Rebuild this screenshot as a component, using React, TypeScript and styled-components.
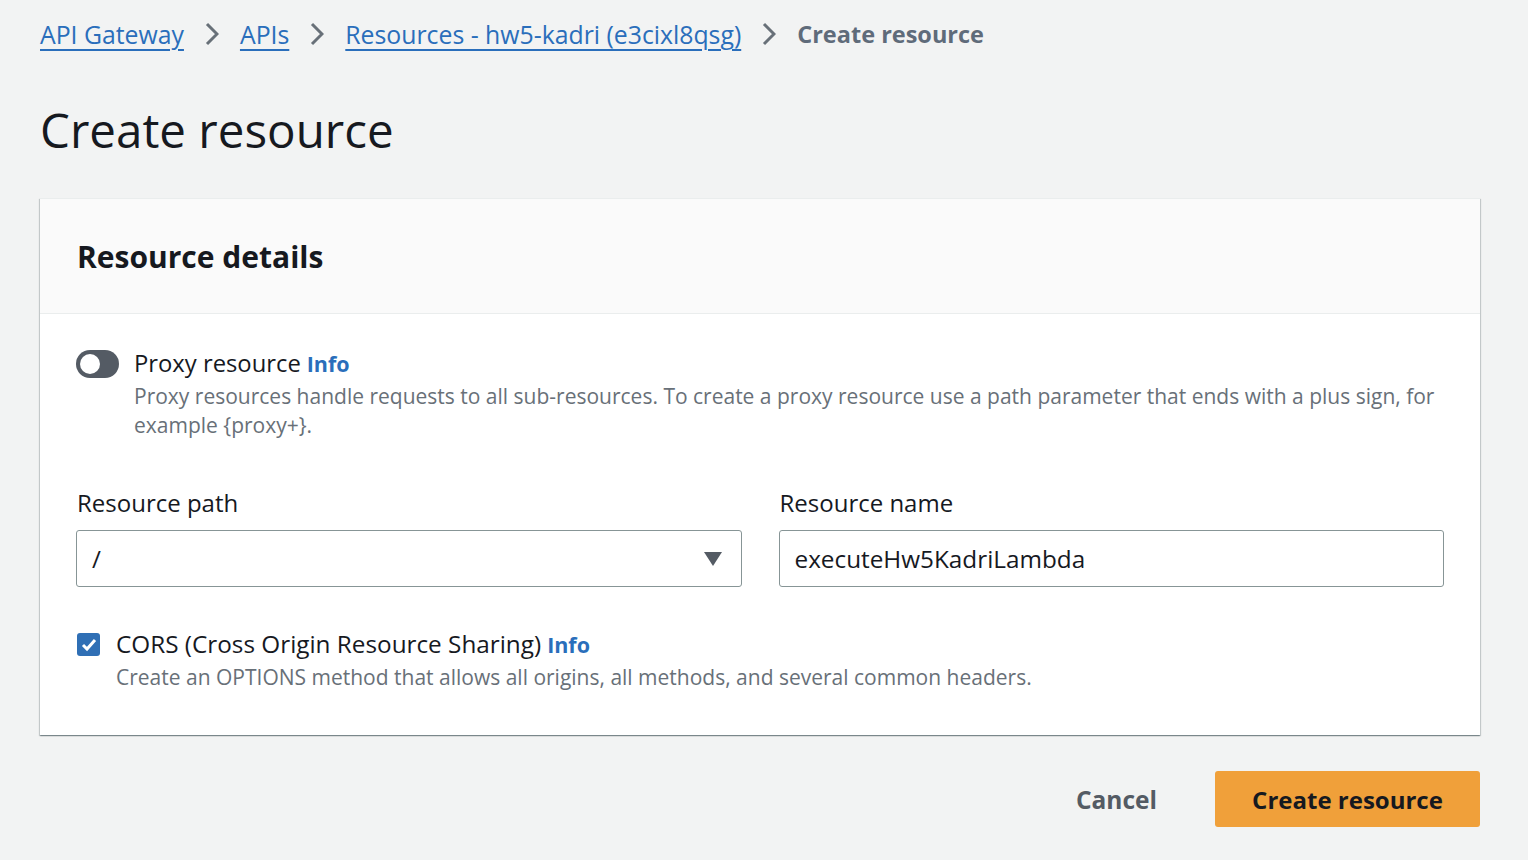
import React from 'react';
import styled, { createGlobalStyle } from 'styled-components';

const GlobalStyle = createGlobalStyle`
  html, body {
    margin: 0;
    padding: 0;
    background: #f2f3f3;
    font-family: "Open Sans", "Noto Sans", sans-serif;
    color: #16191f;
  }
`;

const Page = styled.div`
  padding: 14px 48px 0 40px;
  width: 1440px;
`;

const Breadcrumbs = styled.nav`
  display: flex;
  align-items: center;
  gap: 21px;
  height: 40px;
  font-size: 24.8px;
`;

const Crumb = styled.a`
  color: #2a6ebb;
  text-decoration: underline;
  text-underline-offset: 5px;
  text-decoration-thickness: 2px;
`;

const CurrentCrumb = styled.span`
  color: #5f6b7a;
  font-weight: 700;
  font-size: 23.5px;
`;

const Title = styled.h1`
  margin: 48px 0 40px;
  font-size: 47.5px;
  font-weight: 400;
  line-height: 56px;
`;

const Card = styled.section`
  background: #fff;
  box-shadow: 0 1px 1px 0 rgba(0, 28, 36, 0.3), 1px 1px 1px 0 rgba(0, 28, 36, 0.15),
    -1px 1px 1px 0 rgba(0, 28, 36, 0.15);
  border-top: 1px solid #eaeded;
`;

const CardHeader = styled.header`
  background: #fafafa;
  border-bottom: 1px solid #eaeded;
  height: 114px;
  display: flex;
  align-items: center;
  padding: 0 37px;
`;

const CardTitle = styled.h2`
  margin: 0;
  font-size: 30px;
  font-weight: 700;
`;

const CardBody = styled.div`
  padding: 33px 36px 43px 36px;
  display: flex;
  flex-direction: column;
`;

const OptionRow = styled.div<{ $gap: number }>`
  display: flex;
  align-items: flex-start;
  gap: ${(p) => p.$gap}px;
`;

const Toggle = styled.span`
  flex: none;
  width: 43px;
  height: 28px;
  border-radius: 14px;
  background: #545b64;
  position: relative;
  margin-top: 3px;
  &::after {
    content: '';
    position: absolute;
    left: 4px;
    top: 4px;
    width: 20px;
    height: 20px;
    border-radius: 50%;
    background: #fff;
  }
`;

const CheckBox = styled.span`
  flex: none;
  width: 23px;
  height: 23px;
  border-radius: 3px;
  background: #2f6fb5;
  display: flex;
  align-items: center;
  justify-content: center;
  margin: 5px 0 0 1px;
`;

const OptionText = styled.div`
  display: flex;
  flex-direction: column;
`;

const OptionLabel = styled.div<{ $size: number }>`
  font-size: ${(p) => p.$size}px;
  line-height: 32px;
`;

const Info = styled.a`
  color: #2a6ebb;
  font-weight: 700;
  font-size: 21.5px;
  margin-left: 6px;
`;

const Description = styled.div`
  font-size: 21px;
  line-height: 29px;
  color: #687078;
  margin-top: 2px;
`;

const FieldGrid = styled.div`
  display: grid;
  grid-template-columns: 1fr 1fr;
  gap: 37px;
  margin: 47px 0 41px;
`;

const Field = styled.div`
  display: flex;
  flex-direction: column;
  gap: 11px;
`;

const FieldLabel = styled.label`
  font-size: 24px;
  line-height: 32px;
  padding-left: 1px;
`;

const InputBox = styled.div`
  height: 57px;
  box-sizing: border-box;
  border: 1px solid #879596;
  border-radius: 3px;
  background: #fff;
  display: flex;
  align-items: center;
  justify-content: space-between;
  padding: 0 19px 0 15px;
  font-size: 24.3px;
`;

const Actions = styled.div`
  display: flex;
  justify-content: flex-end;
  align-items: center;
  gap: 58px;
  margin-top: 36px;
`;

const TextButton = styled.button`
  background: none;
  border: none;
  font-family: inherit;
  font-size: 24.5px;
  font-weight: 700;
  color: #545b64;
  padding: 0;
`;

const PrimaryButton = styled.button`
  background: #f0a03a;
  border: none;
  border-radius: 3px;
  height: 56px;
  width: 265px;
  font-family: inherit;
  font-size: 24px;
  font-weight: 700;
  color: #16191f;
`;

const proxyHelp =
  'Proxy resources handle requests to all sub-resources. To create a proxy resource use a path parameter that ends with a plus sign, for example {proxy+}.';

function Chevron() {
  return (
    <svg width="14" height="26" viewBox="0 0 14 26">
      <path d="M2 3l10 10-10 10" fill="none" stroke="#687078" strokeWidth="3" />
    </svg>
  );
}

export default function App() {
  return (
    <>
      <GlobalStyle />
      <Page>
        <Breadcrumbs>
          <Crumb>API Gateway</Crumb>
          <Chevron />
          <Crumb>APIs</Crumb>
          <Chevron />
          <Crumb>Resources - hw5-kadri (e3cixl8qsg)</Crumb>
          <Chevron />
          <CurrentCrumb>Create resource</CurrentCrumb>
        </Breadcrumbs>
        <Title>Create resource</Title>
        <Card>
          <CardHeader>
            <CardTitle>Resource details</CardTitle>
          </CardHeader>
          <CardBody>
            <OptionRow $gap={15}>
              <Toggle />
              <OptionText>
                <OptionLabel $size={23.8}>
                  Proxy resource<Info>Info</Info>
                </OptionLabel>
                <Description>{proxyHelp}</Description>
              </OptionText>
            </OptionRow>
            <FieldGrid>
              <Field>
                <FieldLabel>Resource path</FieldLabel>
                <InputBox>
                  <span>/</span>
                  <svg width="18" height="14" viewBox="0 0 18 14">
                    <path d="M0 0h18L9 14z" fill="#545b64" />
                  </svg>
                </InputBox>
              </Field>
              <Field>
                <FieldLabel>Resource name</FieldLabel>
                <InputBox>executeHw5KadriLambda</InputBox>
              </Field>
            </FieldGrid>
            <OptionRow $gap={16}>
              <CheckBox>
                <svg width="16" height="14" viewBox="0 0 16 14">
                  <path d="M2 7l4 4 8-9" fill="none" stroke="#fff" strokeWidth="3" />
                </svg>
              </CheckBox>
              <OptionText>
                <OptionLabel $size={24.3}>
                  CORS (Cross Origin Resource Sharing)<Info>Info</Info>
                </OptionLabel>
                <Description>
                  Create an OPTIONS method that allows all origins, all methods, and several common headers.
                </Description>
              </OptionText>
            </OptionRow>
          </CardBody>
        </Card>
        <Actions>
          <TextButton>Cancel</TextButton>
          <PrimaryButton>Create resource</PrimaryButton>
        </Actions>
      </Page>
    </>
  );
}
